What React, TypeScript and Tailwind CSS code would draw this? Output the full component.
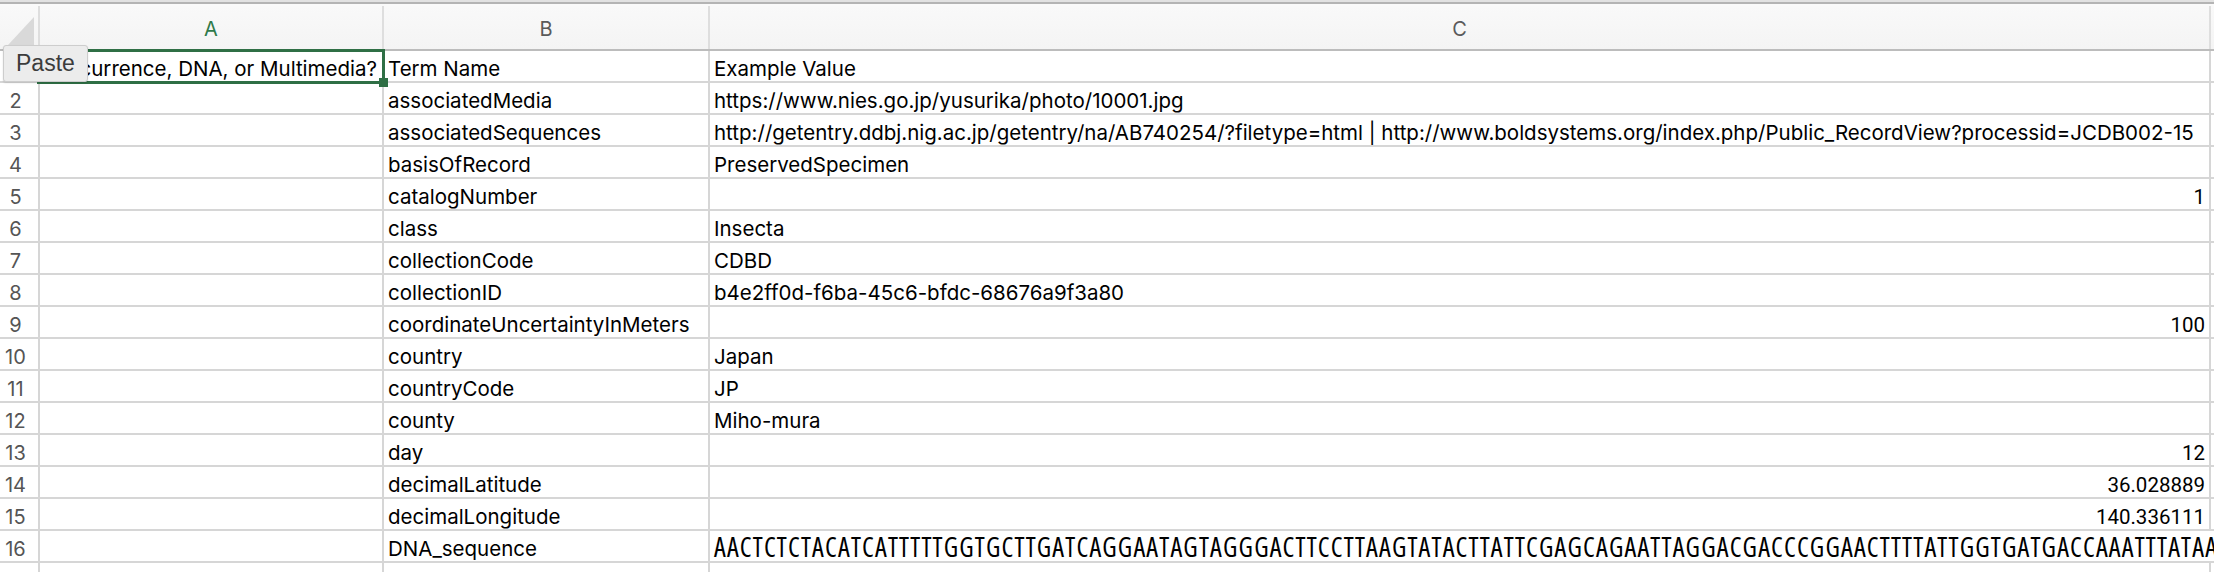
// Excel-ish sheet. Aptos Narrow is not installed; Inter is the nearest look.
const sans = "font-['Inter','Liberation_Sans',sans-serif]";
const grid = "border-[#d6d6d6]";

type Row = { a?: string; b: string; c: string; num?: boolean };

const ROWS: Row[] = [
  { a: "Occurrence, DNA, or Multimedia?", b: "Term Name", c: "Example Value" },
  { b: "associatedMedia", c: "https://www.nies.go.jp/yusurika/photo/10001.jpg" },
  {
    b: "associatedSequences",
    c: "http://getentry.ddbj.nig.ac.jp/getentry/na/AB740254/?filetype=html | http://www.boldsystems.org/index.php/Public_RecordView?processid=JCDB002-15",
  },
  { b: "basisOfRecord", c: "PreservedSpecimen" },
  { b: "catalogNumber", c: "1", num: true },
  { b: "class", c: "Insecta" },
  { b: "collectionCode", c: "CDBD" },
  { b: "collectionID", c: "b4e2ff0d-f6ba-45c6-bfdc-68676a9f3a80" },
  { b: "coordinateUncertaintyInMeters", c: "100", num: true },
  { b: "country", c: "Japan" },
  { b: "countryCode", c: "JP" },
  { b: "county", c: "Miho-mura" },
  { b: "day", c: "12", num: true },
  { b: "decimalLatitude", c: "36.028889", num: true },
  { b: "decimalLongitude", c: "140.336111", num: true },
  {
    b: "DNA_sequence",
    c: "AACTCTCTACATCATTTTTGGTGCTTGATCAGGAATAGTAGGGACTTCCTTAAGTATACTTATTCGAGCAGAATTAGGACGACCCGGAACTTTTATTGGTGATGACCAAATTTATAATGTAATTGTTACAGCTCATGC",
  },
  { b: "", c: "" },
];

function HeaderCell({ w, label, active }: { w: string; label: string; active?: boolean }) {
  return (
    <div className={`${w} flex shrink-0 items-center justify-center border-r-2 border-[#dedede] pt-[2px]`}>
      <span className={`text-[20px] leading-none ${active ? "text-[#2f7a4a]" : "text-[#5a5a5a]"}`}>{label}</span>
    </div>
  );
}

export default function App() {
  return (
    <div className={`relative h-[572px] w-[2214px] overflow-hidden bg-white ${sans}`}>
      {/* bottom edge of the formula bar */}
      <div className="h-[2px] bg-[#e2e2e2]" />
      <div className="h-[2px] bg-[#b4b4b4]" />
      <div className="h-[2px] bg-[#fafafa]" />

      {/* column letters */}
      <div className="flex h-[43px] bg-gradient-to-b from-[#f9f9f9] to-[#f4f4f4]">
        <div className="relative w-[40px] shrink-0 border-r-2 border-[#dedede]">
          <svg className="absolute left-[8px] top-[11px]" width="26" height="28" viewBox="0 0 26 28">
            <polygon points="26,0 26,28 0,28" fill="#d9d9d9" />
          </svg>
        </div>
        <HeaderCell w="w-[344px]" label="A" active />
        <HeaderCell w="w-[326px]" label="B" />
        <HeaderCell w="w-[1501px]" label="C" />
        <div className="flex-1" />
      </div>
      <div className="h-[2px] bg-[#bcbcbc]" />

      {/* rows */}
      {ROWS.map((r, i) => {
        const dna = r.b === "DNA_sequence";
        return (
          <div key={i} className="flex h-[32px]">
            <div className={`flex w-[40px] shrink-0 items-end justify-center border-r-2 border-b-2 ${grid} pb-[1px] pr-[7px]`}>
              <span className="text-[20px] leading-[22px] text-[#555555]">{i + 1}</span>
            </div>
            <div className={`flex w-[344px] shrink-0 items-end justify-end overflow-hidden whitespace-nowrap border-r-2 border-b-2 ${grid} pb-[1px] pr-[5px]`}>
              <span className="text-[20.5px] leading-[22px] text-black">{r.a}</span>
            </div>
            <div className={`flex w-[326px] shrink-0 items-end overflow-hidden whitespace-nowrap border-r-2 border-b-2 ${grid} pb-[1px] pl-[4px]`}>
              <span className="text-[20.5px] leading-[22px] text-black">{r.b}</span>
            </div>
            <div
              className={`flex w-[1501px] shrink-0 items-end whitespace-nowrap border-b-2 ${grid} pb-[1px] ${
                dna ? "overflow-visible pl-[4px]" : "overflow-hidden border-r-2"
              } ${r.num ? "justify-end pr-[4px]" : "pl-[4px]"}`}
            >
              {dna ? (
                <span className="font-['Open_Sans',sans-serif] text-[26.5px] leading-[26px] tracking-[1.2px] text-black [font-stretch:75%]">{r.c}</span>
              ) : r.num ? (
                <span className="font-['Roboto',sans-serif] text-[20.5px] leading-[22px] text-black">{r.c}</span>
              ) : (
                <span className="text-[20.5px] leading-[22px] text-black">{r.c}</span>
              )}
            </div>
            <div className={`flex-1 border-b-2 ${grid}`} />
          </div>
        );
      })}

      {/* selected cell A1 */}
      <div className="pointer-events-none absolute left-[37px] top-[49px] h-[35px] w-[348px] border-[3px] border-[#2f6f45]" />
      <div className="pointer-events-none absolute left-[379px] top-[78px] h-[9px] w-[9px] bg-[#2f6f45]" />

      {/* Paste tooltip */}
      <div className="absolute left-[3px] top-[45px] flex h-[37px] w-[85px] items-center rounded-[3px] border border-[#cdcdcd] bg-[#ececec] pl-[12px] shadow-[0_1px_2px_rgba(0,0,0,0.12)]">
        <span className="font-['Liberation_Sans',Arial,sans-serif] text-[23px] leading-none text-[#3c3c3c]">Paste</span>
      </div>
    </div>
  );
}
